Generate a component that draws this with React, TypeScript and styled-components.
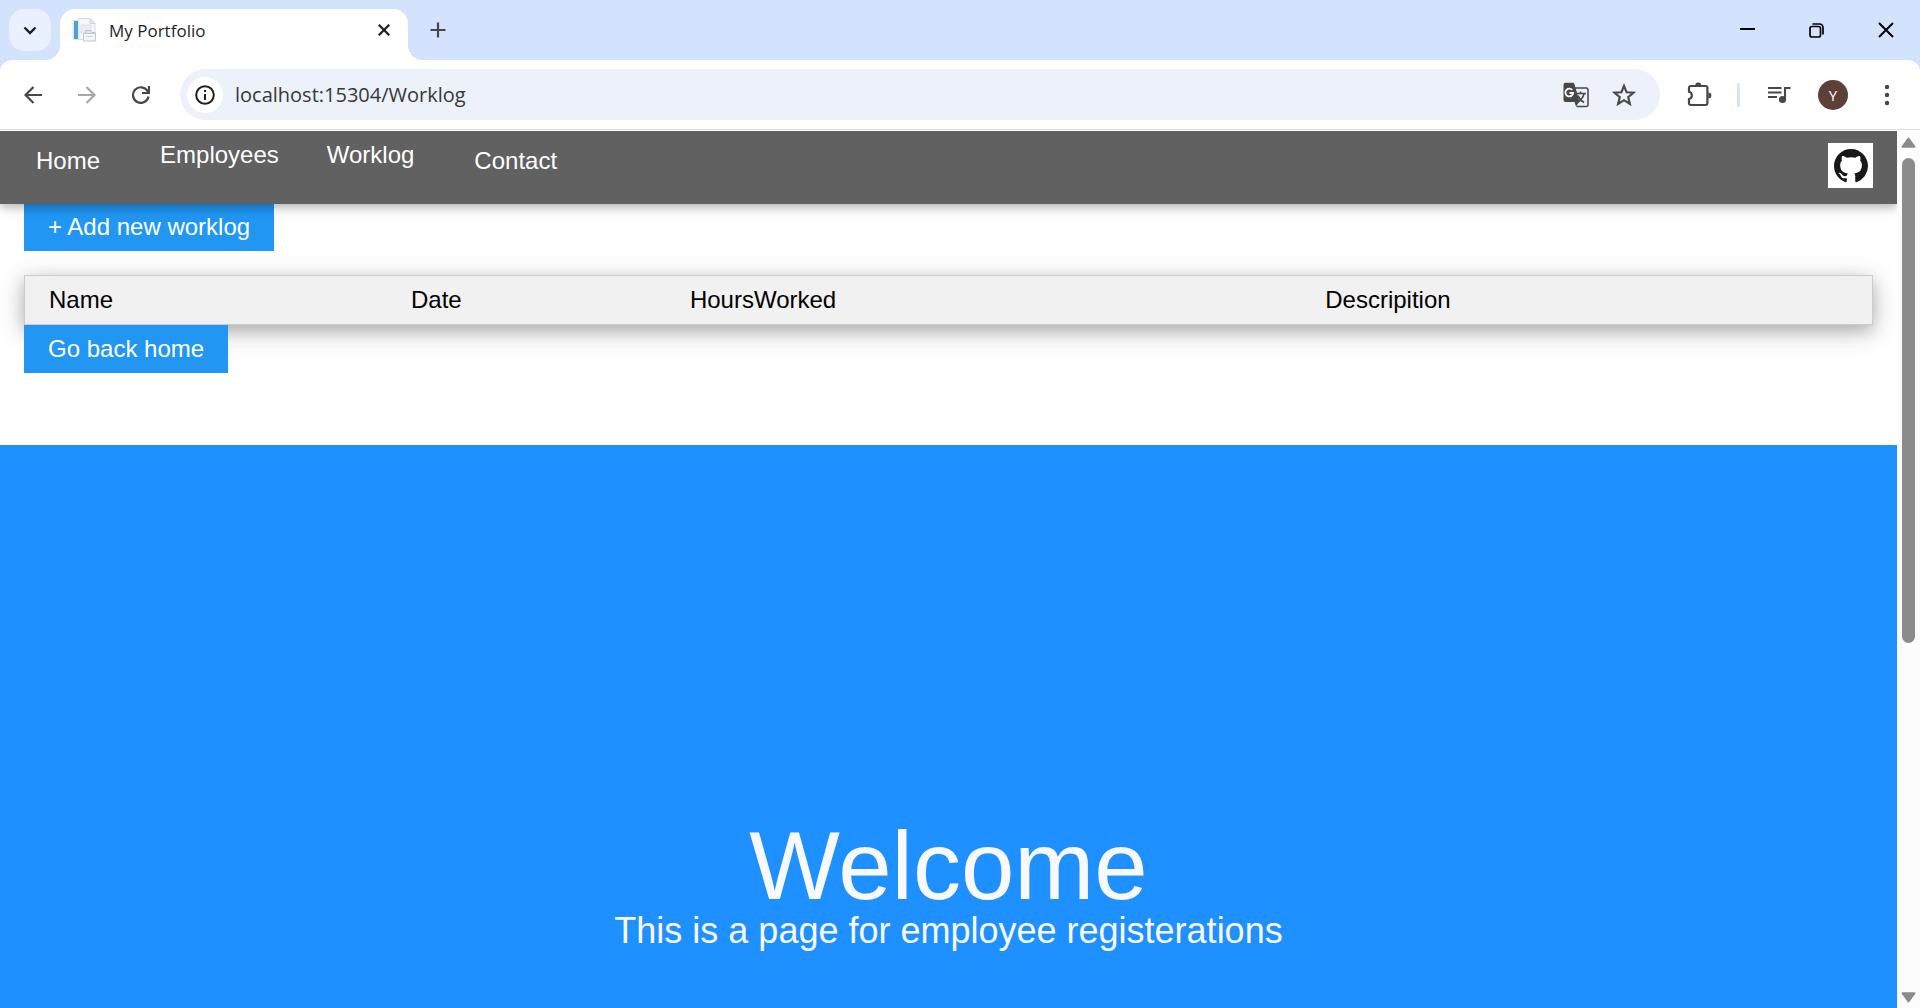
import React from 'react';
import styled, { createGlobalStyle } from 'styled-components';

const GlobalStyle = createGlobalStyle`
  *, *::before, *::after { box-sizing: border-box; }
  html, body { margin: 0; padding: 0; }
  body { overflow: hidden; background: #fff; }
  button, input { font: inherit; }
`;

const ui = `"Open Sans", "Noto Sans", sans-serif`;

const Window = styled.div`
  display: flex;
  flex-direction: column;
  height: 100vh;
  font-family: "Liberation Sans", Arial, sans-serif;
  font-size: 24px;
  line-height: 36px;
`;

const TabStrip = styled.div`
  display: flex;
  flex: none;
  height: 60px;
  padding-left: 9px;
  background: #d3e3fd;
  font-family: ${ui};
`;

const PlainButton = styled.button`
  display: flex;
  align-items: center;
  justify-content: center;
  flex: none;
  padding: 0;
  border: 0;
  background: none;
  color: #474747;
`;

const TabSearch = styled(PlainButton)`
  width: 42px;
  height: 42px;
  margin-top: 9px;
  border-radius: 15px;
  background: #e9f1fe;
  color: #1f1f1f;
`;

const Tab = styled.div`
  position: relative;
  display: flex;
  align-items: center;
  width: 348px;
  height: 51px;
  margin: 9px 0 0 9px;
  padding: 0 10px 9px 12px;
  border-radius: 15px 15px 0 0;
  background: #fff;

  &::before, &::after {
    content: "";
    position: absolute;
    bottom: 0;
    width: 15px;
    height: 15px;
  }
  &::before {
    right: 100%;
    background: radial-gradient(circle at 0 0, transparent 15px, #fff 15px);
  }
  &::after {
    left: 100%;
    background: radial-gradient(circle at 100% 0, transparent 15px, #fff 15px);
  }
`;

const TabTitle = styled.span`
  flex: 1;
  margin-left: 12px;
  padding-top: 2px;
  font-size: 17px;
  line-height: 24px;
  color: #1f1f1f;
`;

const TabButton = styled(PlainButton)`
  width: 28px;
  height: 28px;
  color: #1f1f1f;
`;

const NewTab = styled(PlainButton)`
  width: 42px;
  height: 42px;
  margin: 9px 0 0 9px;
`;

const WindowControls = styled.div`
  display: flex;
  height: 60px;
  margin-left: auto;
`;

const WindowButton = styled(PlainButton)`
  width: 69px;
  color: #000;
`;

const ToolbarBack = styled.div`
  flex: none;
  background: #d3e3fd;
`;

const Toolbar = styled.div`
  display: flex;
  align-items: center;
  height: 70px;
  padding: 0 6px;
  border-bottom: 1px solid #dcdcdc;
  border-radius: 12px 12px 0 0;
  background: #fff;
  font-family: ${ui};
`;

const ToolButton = styled(PlainButton)<{ $muted?: boolean }>`
  width: 54px;
  height: 42px;
  color: ${(p) => (p.$muted ? '#a8a8a8' : '#474747')};
`;

const AddressBar = styled.form`
  display: flex;
  align-items: center;
  flex: 1;
  height: 51px;
  margin: 0 12px;
  padding: 0 12px 0 7px;
  border-radius: 26px;
  background: #ecf1fa;
`;

const SiteInfo = styled(PlainButton)`
  width: 36px;
  height: 36px;
  border-radius: 50%;
  background: #fff;
  color: #1f1f1f;
`;

const AddressField = styled.div`
  display: grid;
  flex: 1;
  margin-left: 12px;
  font-size: 20px;
  line-height: 30px;
`;

const Address = styled.input`
  width: 100%;
  padding: 0;
  border: 0;
  outline: 0;
  background: none;
  color: #37383b;
`;

const AddressButton = styled(PlainButton)`
  width: 48px;
  height: 42px;
`;

const Divider = styled.span`
  width: 3px;
  height: 24px;
  margin: 0 12px 0 11px;
  border-radius: 2px;
  background: #d3e3fd;
`;

const Avatar = styled.button`
  width: 30px;
  height: 30px;
  margin: 0 12px;
  padding: 0;
  border: 0;
  border-radius: 50%;
  background: #5d4037;
  color: #fff;
  font-size: 15px;
  line-height: 30px;
`;

const Viewport = styled.div`
  display: flex;
  flex: 1;
  min-height: 0;
  padding-top: 1px;
`;

const Page = styled.div`
  flex: 1;
  height: 100%;
  overflow: hidden;
  background: #fff;
`;

const NavBar = styled.nav`
  position: relative;
  z-index: 1;
  display: flex;
  align-items: flex-start;
  padding: 12px 24px 16px 12px;
  background: #616161;
  box-shadow: 0 3px 8px rgba(0, 0, 0, 0.18), 0 3px 15px rgba(0, 0, 0, 0.16);
`;

const NavLink = styled.a`
  padding: 0 24px;
  color: #fff;
  text-decoration: none;
`;

const NavGroup = styled.div`
  display: flex;
  margin: -6px 12px 0;
`;

const GitHubLink = styled.a`
  display: flex;
  align-items: center;
  justify-content: center;
  width: 45px;
  height: 45px;
  margin-left: auto;
  background: #fff;
  color: #191717;
`;

const Main = styled.main`
  display: flex;
  flex-direction: column;
  align-items: flex-start;
  margin-top: -1px;
  padding: 0 24px 72px;
`;

const ActionButton = styled.button`
  position: relative;
  padding: 6px 24px;
  border: 0;
  background: #2196f3;
  color: #fff;
`;

const WorklogTable = styled.table`
  width: 100%;
  margin-top: 24px;
  table-layout: fixed;
  border: 1px solid #ccc;
  border-spacing: 0;
  background: #f1f1f1;
  color: #000;
  box-shadow: 0 6px 15px rgba(0, 0, 0, 0.2), 0 6px 30px rgba(0, 0, 0, 0.19);
`;

const HeadCell = styled.th<{ $share?: string }>`
  width: ${(p) => p.$share || 'auto'};
  padding: 6px 0 6px 24px;
  font-weight: 400;
  text-align: left;
`;

const Hero = styled.header`
  padding: 377px 24px;
  background: #1e90ff;
  color: #f8f8ff;
  text-align: center;
`;

const HeroTitle = styled.h1`
  margin: 0;
  font-size: 96px;
  line-height: 88px;
  font-weight: 400;
`;

const HeroText = styled.p`
  margin: 0;
  font-size: 36px;
  line-height: 42px;
`;

const ScrollTrack = styled.div`
  display: flex;
  flex-direction: column;
  align-items: center;
  flex: none;
  width: 23px;
  padding: 6px 0 5px;
  background: #fcfcfc;
  color: #8b8b8b;
`;

const ScrollSpace = styled.div`
  display: flex;
  flex-direction: column;
  flex: 1;
  margin: 10px 0 9px;
`;

const ScrollThumb = styled.div`
  width: 13px;
  height: 58.8%;
  border-radius: 7px;
  background: #8b8b8b;
`;

const line = { fill: 'none', stroke: 'currentColor' } as const;

const ChevronIcon = () => (
  <svg width="14" height="9" viewBox="0 0 14 9" {...line} strokeWidth="2.4">
    <path d="M1.5 1.5 7 7l5.5-5.5" />
  </svg>
);

const FaviconIcon = () => (
  <svg width="25" height="24" viewBox="0 0 25 24">
    <path d="M6.500.5H18l5 5v16H6.500z" fill="#f5f6f7" stroke="#d9dcdf" />
    <path d="M18 .5v5h5z" fill="#e6e9ec" stroke="#d3d7db" />
    <path d="M1 2.500h6v19H1z" fill="#ececec" stroke="#e2e2e2" />
    <path d="M2 3h4v18H2z" fill="#4ba0da" />
    <path d="M9 7h10v8H9z" fill="#e9ecf2" stroke="#dfe3e8" />
    <path d="M13.500 12.500h5l1 2h4v3h-10z" fill="#dfe3ea" stroke="#c3c8d0" />
    <path d="M11.500 15.500h12v7.500h-12z" fill="#f3f5f8" stroke="#c3c8d0" />
    <path d="M14 18.500h7" stroke="#cfd5dd" />
  </svg>
);

const CloseIcon = ({ size, weight }: { size: number; weight: number }) => (
  <svg width={size} height={size} viewBox="0 0 16 16" {...line} strokeWidth={weight}>
    <path d="M1 1l14 14M15 1 1 15" />
  </svg>
);

const PlusIcon = () => (
  <svg width="16" height="16" viewBox="0 0 16 16" {...line} strokeWidth="2.2">
    <path d="M8 .5v15M.5 8h15" />
  </svg>
);

const MinimizeIcon = () => (
  <svg width="15" height="16" viewBox="0 0 15 16" {...line} strokeWidth="2">
    <path d="M0 7h15" />
  </svg>
);

const RestoreIcon = () => (
  <svg width="15" height="15" viewBox="0 0 15 15" {...line} strokeWidth="1.7">
    <rect x="1" y="3.5" width="10.5" height="10.5" rx="2" />
    <path d="M3.5 1h7A3.5 3.5 0 0 1 14 4.500v7" />
  </svg>
);

const ArrowIcon = ({ forward }: { forward?: boolean }) => (
  <svg width="18" height="18" viewBox="0 0 18 18" {...line} strokeWidth="2.2">
    <path d={forward ? 'M0 9h16M8.5 1 16.5 9l-8 8' : 'M18 9H2M9.5 1 1.5 9l8 8'} />
  </svg>
);

const ReloadIcon = () => (
  <svg width="18" height="18" viewBox="0 0 18 18" {...line} strokeWidth="2.2">
    <path d="M16.5 10.5A7.8 7.8 0 1 1 15.5 5l1 1.500" />
    <path d="M17 0v7h-7" />
  </svg>
);

const InfoIcon = () => (
  <svg width="20" height="20" viewBox="0 0 20 20" {...line} strokeWidth="2">
    <circle cx="10" cy="10" r="8.8" />
    <path d="M10 9v6M10 5v2" />
  </svg>
);

const TranslateIcon = () => (
  <svg width="26" height="26" viewBox="0 0 26 26">
    <path d="M11 6h12.200a1.800 1.800 0 0 1 1.800 1.800v14.900a1.800 1.800 0 0 1-1.800 1.800H13.500" {...line} strokeWidth="1.5" />
    <path d="M2.500.8H9.500a2 2 0 0 1 2 1.400L16.500 19.500 13 24.500l-1.500-4.500H2.500a2 2 0 0 1-2-2V2.800a2 2 0 0 1 2-2z" fill="currentColor" />
    <path d="M9.300 8a3.900 3.900 0 1 0 .9 3H6.500" fill="none" stroke="#fff" strokeWidth="1.8" />
    <path d="M13.500 11.500h9.500M17.500 9.500v2M21 11.500c-.6 3.500-2.500 6-5.500 8M15 13.500c1.300 3.500 3.500 5.500 6 7" {...line} strokeWidth="1.6" />
  </svg>
);

const StarIcon = () => (
  <svg width="24" height="24" viewBox="0 0 24 24" {...line} strokeWidth="2.1">
    <path d="m12 3 2.600 6.200 6.900.5-5.300 4.400 1.700 6.800L12 17.200l-5.900 3.700 1.700-6.800-5.300-4.400 6.900-.5z" />
  </svg>
);

const PuzzleIcon = () => (
  <svg width="25" height="25" viewBox="0 0 25 25">
    <path
      d="M3.500 4h15.200A1.700 1.700 0 0 1 20.400 5.700v15.600a1.700 1.700 0 0 1-1.700 1.700H3.700A1.700 1.700 0 0 1 2 21.300V17a3.700 3.700 0 0 0 0-7.200V5.700A1.700 1.700 0 0 1 3.700 4z"
      {...line}
      strokeWidth="2.2"
    />
    <path d="M8.200 3.500a3 3 0 0 1 6 0zM21.400 10.500a3 3 0 0 1 0 6z" fill="currentColor" />
  </svg>
);

const MediaIcon = () => (
  <svg width="24" height="18" viewBox="0 0 24 18">
    <path d="M1 2h13.500M1 6.500h13.500M1 11h9M18 14V2h5.500" {...line} strokeWidth="2.1" />
    <circle cx="15.5" cy="13.5" r="3.6" fill="currentColor" />
  </svg>
);

const MenuIcon = () => (
  <svg width="6" height="22" viewBox="0 0 6 22" fill="currentColor">
    <circle cx="3" cy="3" r="2.2" />
    <circle cx="3" cy="11" r="2.2" />
    <circle cx="3" cy="19" r="2.2" />
  </svg>
);

const GitHubIcon = () => (
  <svg width="34" height="34" viewBox="0 0 16 16" fill="currentColor">
    <path d="M8 0C3.580 0 0 3.580 0 8c0 3.540 2.290 6.530 5.470 7.590.4.070.55-.17.55-.38 0-.19-.01-.82-.01-1.490-2.010.37-2.530-.49-2.690-.94-.09-.23-.48-.94-.82-1.130-.28-.15-.68-.52-.01-.53.63-.01 1.080.58 1.230.82.72 1.210 1.870.87 2.330.66.07-.52.28-.87.51-1.070-1.780-.2-3.640-.89-3.640-3.950 0-.87.31-1.590.82-2.150-.08-.2-.36-1.020.08-2.120 0 0 .67-.21 2.200.82.64-.18 1.320-.27 2-.27s1.360.09 2 .27c1.530-1.040 2.200-.82 2.200-.82.44 1.100.16 1.920.08 2.120.51.56.82 1.270.82 2.150 0 3.070-1.870 3.750-3.650 3.950.29.25.54.73.54 1.480 0 1.070-.01 1.930-.01 2.200 0 .21.15.46.55.38A8.010 8.010 0 0 0 16 8c0-4.420-3.580-8-8-8z" />
  </svg>
);

const ScrollArrow = ({ down }: { down?: boolean }) => (
  <svg width="15" height="11" viewBox="0 0 15 11" fill="currentColor" stroke="currentColor" strokeWidth="2" strokeLinejoin="round">
    <path d={down ? 'M1.5 1.2h12L7.5 9.500z' : 'M1.5 9.800h12L7.5 1.500z'} />
  </svg>
);

const columns = [
  { label: 'Name', share: '19.6%' },
  { label: 'Date', share: '15.1%' },
  { label: 'HoursWorked', share: '34.4%' },
  { label: 'Descripition' },
];

export default function App() {
  return (
    <Window>
      <GlobalStyle />
      <TabStrip>
        <TabSearch aria-label="Search tabs"><ChevronIcon /></TabSearch>
        <Tab>
          <FaviconIcon />
          <TabTitle>My Portfolio</TabTitle>
          <TabButton aria-label="Close tab"><CloseIcon size={12} weight={3} /></TabButton>
        </Tab>
        <NewTab aria-label="New tab"><PlusIcon /></NewTab>
        <WindowControls>
          <WindowButton aria-label="Minimize"><MinimizeIcon /></WindowButton>
          <WindowButton aria-label="Restore"><RestoreIcon /></WindowButton>
          <WindowButton aria-label="Close"><CloseIcon size={16} weight={2} /></WindowButton>
        </WindowControls>
      </TabStrip>
      <ToolbarBack>
        <Toolbar>
          <ToolButton aria-label="Back"><ArrowIcon /></ToolButton>
          <ToolButton aria-label="Forward" $muted><ArrowIcon forward /></ToolButton>
          <ToolButton aria-label="Reload"><ReloadIcon /></ToolButton>
          <AddressBar onSubmit={(e) => e.preventDefault()}>
            <SiteInfo type="button" aria-label="Site information"><InfoIcon /></SiteInfo>
            <AddressField>
              <Address aria-label="Address" defaultValue="localhost:15304/Worklog" spellCheck={false} />
            </AddressField>
            <AddressButton type="button" aria-label="Translate"><TranslateIcon /></AddressButton>
            <AddressButton type="button" aria-label="Bookmark"><StarIcon /></AddressButton>
          </AddressBar>
          <ToolButton aria-label="Extensions"><PuzzleIcon /></ToolButton>
          <Divider />
          <ToolButton aria-label="Media"><MediaIcon /></ToolButton>
          <Avatar aria-label="Profile Y">Y</Avatar>
          <ToolButton aria-label="Menu"><MenuIcon /></ToolButton>
        </Toolbar>
      </ToolbarBack>
      <Viewport>
        <Page>
          <NavBar>
            <NavLink href="#home">Home</NavLink>
            <NavGroup>
              <NavLink href="#employees">Employees</NavLink>
              <NavLink href="#worklog">Worklog</NavLink>
            </NavGroup>
            <NavLink href="#contact">Contact</NavLink>
            <GitHubLink href="#github" aria-label="GitHub"><GitHubIcon /></GitHubLink>
          </NavBar>
          <Main>
            <ActionButton>+ Add new worklog</ActionButton>
            <WorklogTable>
              <thead>
                <tr>
                  {columns.map((c) => (
                    <HeadCell key={c.label} scope="col" $share={c.share}>{c.label}</HeadCell>
                  ))}
                </tr>
              </thead>
            </WorklogTable>
            <ActionButton>Go back home</ActionButton>
          </Main>
          <Hero>
            <HeroTitle>Welcome</HeroTitle>
            <HeroText>This is a page for employee registerations</HeroText>
          </Hero>
        </Page>
        <ScrollTrack aria-hidden="true">
          <ScrollArrow />
          <ScrollSpace><ScrollThumb /></ScrollSpace>
          <ScrollArrow down />
        </ScrollTrack>
      </Viewport>
    </Window>
  );
}
